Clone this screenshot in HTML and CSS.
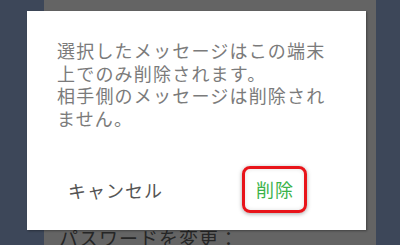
FILE: index.html
```html
<!DOCTYPE html>
<html lang="ja">
<head>
  <meta charset="UTF-8" />
  <meta name="viewport" content="width=device-width, initial-scale=1.0"/>
  <title>メッセージを削除</title>
  <link rel="stylesheet" href="styles.css">
</head>
<body>
  <div class="screen">
    <div class="side side-left"></div>
    <div class="panel">
      <div class="panel-label">パスワードを変更：</div>
    </div>
    <div class="side side-right"></div>

    <div class="dialog">
      <p class="message">選択したメッセージはこの端末上でのみ削除されます。<br>相手側のメッセージは削除されません。</p>
      <div class="actions">
        <button type="button" class="btn btn-cancel">キャンセル</button>
        <button type="button" class="btn btn-delete">削除</button>
      </div>
    </div>
  </div>
</body>
</html>
```

FILE: styles.css
```css
* {
  box-sizing: border-box;
}

body {
  margin: 0;
  padding: 0;
  font-family: "Noto Sans CJK JP", "Noto Sans", sans-serif;
  background: #3d4759;
}

.screen {
  position: relative;
  display: flex;
  width: 400px;
  height: 245px;
  overflow: hidden;
}

.side {
  background: #3d4759;
}

.side-left {
  width: 44px;
}

.side-right {
  width: 24px;
}

.panel {
  flex: 1;
  display: flex;
  align-items: flex-end;
  background: #646464;
  padding: 0 0 0 15px;
}

.panel-label {
  font-size: 19px;
  line-height: 24px;
  margin-bottom: -5px;
  color: #262626;
  letter-spacing: 1px;
}

.dialog {
  position: absolute;
  left: 27px;
  top: 11px;
  width: 339px;
  height: 219px;
  background: #fff;
  box-shadow: 1px 1px 2px rgba(0,0,0,0.35);
  padding: 28px 28px 0 30px;
  display: flex;
  flex-direction: column;
}

.message {
  margin: 0;
  font-size: 18px;
  line-height: 22.5px;
  letter-spacing: 1.2px;
  color: #7b7b7b;
}

.actions {
  display: flex;
  align-items: center;
  justify-content: space-between;
  margin-top: 37px;
  padding: 0 31px 0 11px;
}

.btn {
  font-family: inherit;
  font-size: 18px;
  letter-spacing: 1px;
  background: none;
  border: none;
  padding: 0;
  cursor: pointer;
}

.btn-cancel {
  color: #555;
}

.btn-delete {
  color: #3bb34a;
  border: 3px solid #e8141a;
  border-radius: 8px;
  padding: 7px 10px 8px 11px;
  box-shadow: 0 1px 4px rgba(0,0,0,0.35), inset 0 0 4px rgba(0,0,0,0.12);
}
```
